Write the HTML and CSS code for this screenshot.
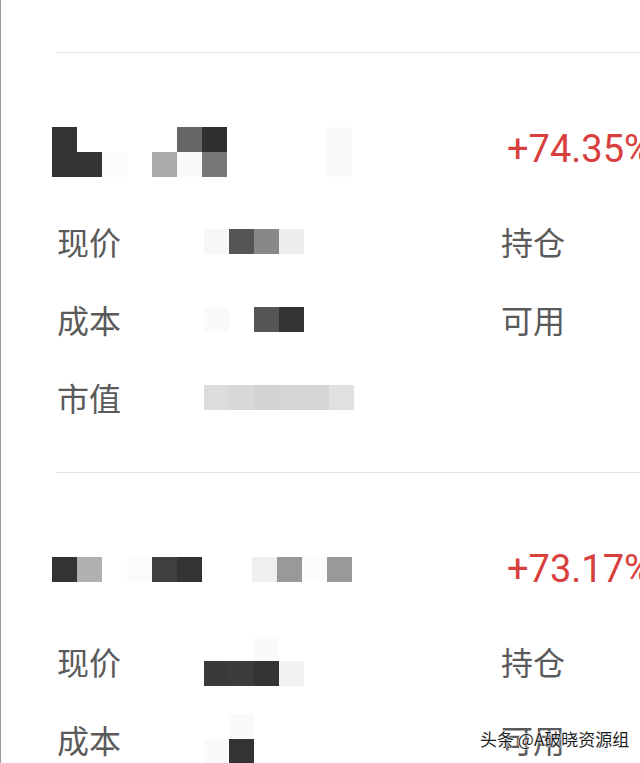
FILE: index.html
```html
<!DOCTYPE html>
<html lang="zh-CN">
<head>
  <meta charset="UTF-8">
  <title>持仓</title>
  <link rel="stylesheet" href="styles.css">
</head>
<body>
  <div class="page">
    <div class="stock">
      <div class="head">
        <div class="mosaic name">
          <i class="g33"></i><i></i><i></i><i></i><i></i><i class="g66"></i><i class="g2f"></i><i></i><i></i><i></i><i></i><i class="gfa"></i>
          <i class="g33"></i><i class="g33"></i><i class="gfb"></i><i></i><i class="gaa"></i><i class="gfa"></i><i class="g77"></i><i></i><i></i><i></i><i></i><i class="gfa"></i>
        </div>
        <div class="pct">+74.35%</div>
      </div>
      <div class="row">
        <span class="label">现价</span>
        <div class="mosaic val"><i class="gf7"></i><i class="g55"></i><i class="g88"></i><i class="gee"></i></div>
        <span class="label">持仓</span>
      </div>
      <div class="row">
        <span class="label">成本</span>
        <div class="mosaic val"><i class="gfa"></i><i></i><i class="g55"></i><i class="g33"></i></div>
        <span class="label">可用</span>
      </div>
      <div class="row">
        <span class="label">市值</span>
        <div class="mosaic val"><i class="gdc"></i><i class="gd8"></i><i class="gd3"></i><i class="gd6"></i><i class="gd6"></i><i class="ge0"></i></div>
        <span></span>
      </div>
    </div>

    <div class="stock">
      <div class="head">
        <div class="mosaic name up">
          <i class="g33"></i><i class="gb0"></i><i></i><i class="gfb"></i><i class="g40"></i><i class="g33"></i><i></i><i></i><i class="gef"></i><i class="g99"></i><i class="gfc"></i><i class="g99"></i>
        </div>
        <div class="pct">+73.17%</div>
      </div>
      <div class="row">
        <span class="label">现价</span>
        <div class="mosaic val">
          <i></i><i></i><i class="gfa"></i><i></i><i></i><i></i>
          <i class="g3a"></i><i class="g3c"></i><i class="g33"></i><i class="gf2"></i>
        </div>
        <span class="label">持仓</span>
      </div>
      <div class="row">
        <span class="label">成本</span>
        <div class="mosaic val">
          <i></i><i class="gfa"></i><i></i><i></i><i></i><i></i>
          <i class="gfa"></i><i class="g33"></i>
        </div>
        <span class="label">可用</span>
      </div>
    </div>
  </div>

  <div class="watermark">头条 @A破晓资源组</div>
</body>
</html>
```

FILE: styles.css
```css
body {
  margin: 0;
  width: 640px;
  height: 763px;
  overflow: hidden;
  background: #fff;
  font-family: "Noto Sans CJK SC", sans-serif;
}
.page {
  border-left: 1px solid #9a9a9a;
  min-height: 763px;
  padding: 52px 0 0 55px;
  box-sizing: border-box;
}
.stock {
  border-top: 1px solid #e2e2e2;
  padding-bottom: 36px;
}
.head {
  display: grid;
  grid-template-columns: 451px auto;
  align-items: center;
  height: 50px;
  padding-top: 74px;
  margin-bottom: 25px;
}
.pct {
  font-family: Roboto, "Liberation Sans", sans-serif;
  font-size: 38px;
  line-height: 1;
  color: #d8403d;
  white-space: nowrap;
  margin-top: -6px;
}
.row {
  display: grid;
  grid-template-columns: 147px 297px auto;
  align-items: center;
  height: 78px;
  padding-left: 1px;
}
.label {
  font-size: 32px;
  line-height: 1;
  color: #5a5a5a;
}

/* pixelated blocks */
.mosaic {
  display: grid;
  grid-auto-rows: 25px;
}
.mosaic.name {
  grid-template-columns: repeat(12, 25px);
  margin-left: -4px;
}
.mosaic.name.up { margin-top: -6px; }
.mosaic.val {
  grid-template-columns: repeat(6, 25px);
}
.mosaic i { display: block; }
.g2f { background: #2f2f2f; }
.g33 { background: #333; }
.g3a { background: #3a3a3a; }
.g3c { background: #3c3c3c; }
.g40 { background: #404040; }
.g55 { background: #555; }
.g66 { background: #666; }
.g77 { background: #777; }
.g88 { background: #888; }
.g99 { background: #999; }
.gaa { background: #aaa; }
.gb0 { background: #b0b0b0; }
.gd3 { background: #d3d3d3; }
.gd6 { background: #d6d6d6; }
.gd8 { background: #d8d8d8; }
.gdc { background: #dcdcdc; }
.ge0 { background: #e0e0e0; }
.gee { background: #eee; }
.gef { background: #efefef; }
.gf2 { background: #f2f2f2; }
.gf7 { background: #f7f7f7; }
.gfa { background: #fafafa; }
.gfb { background: #fbfbfb; }
.gfc { background: #fcfcfc; }

.watermark {
  position: absolute;
  left: 480px;
  top: 730px;
  font-size: 17px;
  line-height: 1;
  color: #1e1e1e;
  white-space: nowrap;
  text-shadow: 0 0 2px #fff, 0 0 2px #fff, 0 0 1px #fff;
}
```
